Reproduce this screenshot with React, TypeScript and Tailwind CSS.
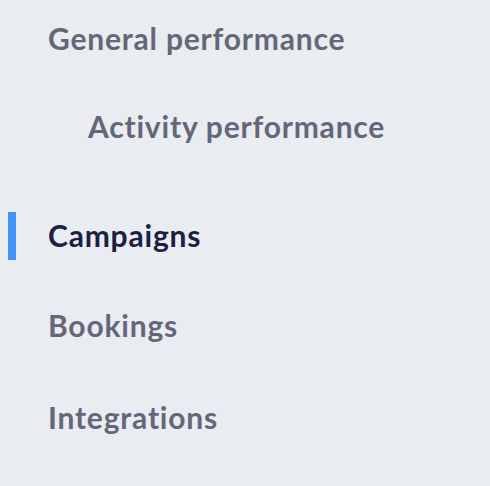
import React from "react";

type Item = { label: string; indent?: boolean; active?: boolean; mt: string };

const items: Item[] = [
  { label: "General performance", mt: "mt-[15px]" },
  { label: "Activity performance", indent: true, mt: "mt-10" },
  { label: "Campaigns", active: true, mt: "mt-[61px]" },
  { label: "Bookings", mt: "mt-[42px]" },
  { label: "Integrations", mt: "mt-[44px]" },
];

export default function App() {
  return (
    <div
      className="w-[490px] h-[486px] bg-[#e9ecf0] flex flex-col"
      style={{ fontFamily: "Lato, 'Open Sans', sans-serif" }}
    >
      {items.map((it) => (
        <div key={it.label} className={`${it.mt} h-12 flex items-center`}>
          <div className={`ml-2 w-2 h-12 ${it.active ? "bg-[#4493f8]" : "bg-transparent"}`} />
          <span
            className={`${it.indent ? "ml-[72px]" : "ml-8"} text-[30px] leading-none font-bold tracking-[0.8px] -translate-y-px ${
              it.active ? "text-[#1b2142]" : "text-[#646779]"
            }`}
          >
            {it.label}
          </span>
        </div>
      ))}
    </div>
  );
}
